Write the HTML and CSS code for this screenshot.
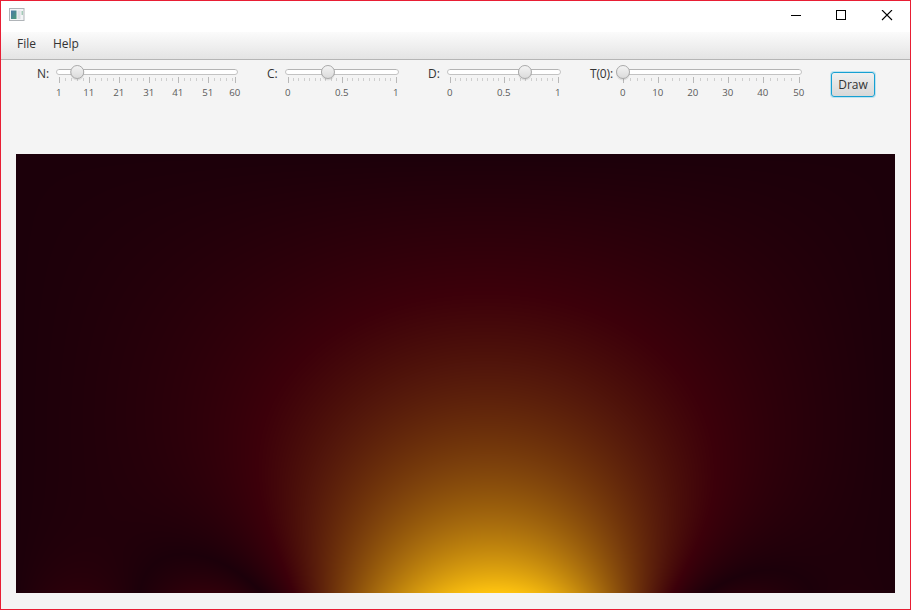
FILE: index.html
```
<!DOCTYPE html>
<html lang="en">
<head>
<meta charset="utf-8">
<title>Heat</title>
<link rel="stylesheet" href="styles.css">
</head>
<body>
<div class="window">
  <header class="titlebar">
    <svg class="app-icon" width="16" height="14" viewBox="0 0 16 14">
      <defs><linearGradient id="pane" x1="0" y1="0" x2="1" y2="1"><stop offset="0" stop-color="#4b78a8"/><stop offset="1" stop-color="#4c9c78"/></linearGradient></defs>
      <rect x=".5" y=".5" width="14.500" height="12" fill="#f4f5f6" stroke="#b0b4b8"/>
      <rect x="2" y="2.500" width="5.500" height="8.500" fill="url(#pane)"/>
      <rect x="8.500" y="2.500" width="3" height="8.500" fill="#dde0e5"/>
      <rect x="12.500" y="3" width="1.500" height="4" fill="#a4cbb8"/>
    </svg>
    <svg class="controls" width="104" height="12" viewBox="0 0 104 12" shape-rendering="crispEdges">
      <path d="M0 5.5h10M45.500 .5h9v9h-9z" fill="none" stroke="#000"/>
      <path d="M91 0l10 10M101 0l-10 10" fill="none" stroke="#000" stroke-width="1.1" shape-rendering="auto"/>
    </svg>
  </header>
  <nav class="menubar"><span>File</span><span>Help</span></nav>
  <main>
    <div class="toolbar">
      <div class="field n"><label>N:</label><svg class="slider" height="40" width="190" data-width="182" data-start="3.300" data-end="179.800" data-majors="0,10,20,30,40,50,59" data-labels="1,11,21,31,41,51,60" data-span="59" data-step="2" data-value="6"></svg></div>
      <div class="field c"><label>C:</label><svg class="slider" height="40" width="122" data-width="114" data-start="3" data-end="111" data-majors="0,.5,1" data-labels="0,0.5,1" data-span="1" data-step=".05" data-value=".37"></svg></div>
      <div class="field d"><label>D:</label><svg class="slider" height="40" width="122" data-width="114" data-start="3" data-end="111" data-majors="0,.5,1" data-labels="0,0.5,1" data-span="1" data-step=".05" data-value=".694"></svg></div>
      <div class="field t"><label>T(0):</label><svg class="slider" height="40" width="194" data-width="182" data-start="3" data-end="179" data-majors="0,10,20,30,40,50" data-labels="0,10,20,30,40,50" data-span="50" data-step="2" data-value="0"></svg></div>
      <button class="draw">Draw</button>
    </div>
    <canvas class="plot" width="879" height="439"></canvas>
  </main>
</div>
<script src="app.js"></script>
</body>
</html>
```
FILE: styles.css
```
* { box-sizing: border-box; }
body { margin: 0; background: #f4f4f4; font: 12px "Open Sans", "Noto Sans", sans-serif; color: #333; }
.window { width: 911px; height: 610px; border: 1px solid #e81e34; background: #f4f4f4; display: flex; flex-direction: column; overflow: hidden; }
.titlebar { height: 31px; flex: none; background: #fff; display: flex; justify-content: space-between; padding: 7px 15px 0 8px; }
.controls { margin-top: 2px; }
.menubar { height: 28px; flex: none; display: flex; gap: 17px; padding: 3px 16px 0; line-height: 18px; background: linear-gradient(#fbfbfb, #e4e4e4); border-bottom: 1px solid #b5b5b5; }
main { padding: 0 15px; }
.toolbar { display: flex; height: 94px; padding-top: 4px; }
.field { display: flex; align-items: flex-start; flex: none; }
.field label { margin-top: 2px; line-height: 16px; flex: 1; white-space: nowrap; }
.n { width: 209px; margin-left: 21px; }
.c { width: 140px; margin-left: 21px; }
.d { width: 141px; margin-left: 21px; }
.t { width: 224px; margin-left: 21px; }
.t label { letter-spacing: -.15px; }
.slider { flex: none; overflow: visible; }
.slider text { font: 9.7px "Open Sans", sans-serif; fill: #5a5a5a; text-anchor: middle; }
.draw { width: 44px; height: 25px; flex: none; margin: 8px 0 0 17px; padding: 0; border: 1.500px solid #16a0d2; border-radius: 3px; background: linear-gradient(#f0f0f0, #d8d8d8); box-shadow: 0 0 0 1px #8ed4ec88; font: inherit; color: #333; line-height: 20px; }
.plot { display: block; }
```
FILE: app.js
```
const NS = "http://www.w3.org/2000/svg";

function add(parent, tag, attrs, text) {
  const el = document.createElementNS(NS, tag);
  for (const key in attrs) el.setAttribute(key, attrs[key]);
  if (text !== undefined) el.textContent = text;
  parent.appendChild(el);
  return el;
}

document.querySelectorAll(".slider").forEach((svg, i) => {
  const d = svg.dataset;
  const start = +d.start, end = +d.end, span = +d.span;
  const pos = v => start + v / span * (end - start);
  const majors = d.majors.split(",").map(Number);
  const labels = d.labels.split(",");
  const defs = add(svg, "defs", {});
  const g = add(defs, "linearGradient", { id: "thumb" + i, x1: 0, y1: 0, x2: 0, y2: 1 });
  add(g, "stop", { offset: 0, "stop-color": "#f4f4f4" });
  add(g, "stop", { offset: 1, "stop-color": "#dadada" });
  add(svg, "rect", { x: .5, y: 5.5, width: d.width - 1, height: 5, rx: 2.5, fill: "#fff", stroke: "#c3c3c3" });
  add(svg, "path", { d: `M3 5.5H${d.width - 3}`, stroke: "#b4b4b4" });
  for (let v = +d.step; v < span - 1e-6; v += +d.step) {
    if (majors.some(m => Math.abs(m - v) < 1e-6)) continue;
    const x = Math.floor(pos(v)) + .5;
    add(svg, "path", { d: `M${x} 14v3`, stroke: "#cecece" });
  }
  majors.forEach((v, k) => {
    const x = Math.floor(pos(v)) + .5;
    add(svg, "path", { d: `M${x} 13v6`, stroke: "#b8b8b8" });
    add(svg, "text", { x: x - .7, y: 32 }, labels[k]);
  });
  const x = pos(+d.value);
  add(svg, "circle", { cx: x, cy: 9.5, r: 7, fill: "#000", opacity: .08 });
  add(svg, "circle", { cx: x, cy: 8, r: 6.5, fill: `url(#thumb${i})`, stroke: "#a9a9a9" });
});

// Steady temperature in a plate heated along the lower edge between c and d.
const canvas = document.querySelector(".plot");
const ctx = canvas.getContext("2d");
const w = canvas.width, h = canvas.height;
const terms = 7, c = .376, d = .697, knee = .135;
const img = ctx.createImageData(w, h);
const field = new Float64Array(w * h);
let peak = 0;
for (let y = 0; y < h; y++) {
  const amp = [];
  for (let n = 1; n <= terms; n++) {
    const k = n * Math.PI;
    amp.push(2 / k * (Math.cos(k * c) - Math.cos(k * d)) * Math.sinh(k * y / w) / Math.sinh(k * h / w));
  }
  for (let x = 0; x < w; x++) {
    let u = 0;
    for (let n = 1; n <= terms; n++) u += amp[n - 1] * Math.sin(n * Math.PI * x / w);
    u = Math.abs(u);
    field[y * w + x] = u;
    if (u > peak) peak = u;
  }
}
const cold = [28, 0, 10], warm = [60, 0, 10], hot = [255, 196, 15];
for (let i = 0; i < field.length; i++) {
  const u = field[i] / peak;
  const low = u < knee;
  const t = low ? u / knee : (u - knee) / (1 - knee);
  const a = low ? cold : warm, b = low ? warm : hot;
  for (let k = 0; k < 3; k++) img.data[i * 4 + k] = a[k] + (b[k] - a[k]) * t;
  img.data[i * 4 + 3] = 255;
}
ctx.putImageData(img, 0, 0);
```
